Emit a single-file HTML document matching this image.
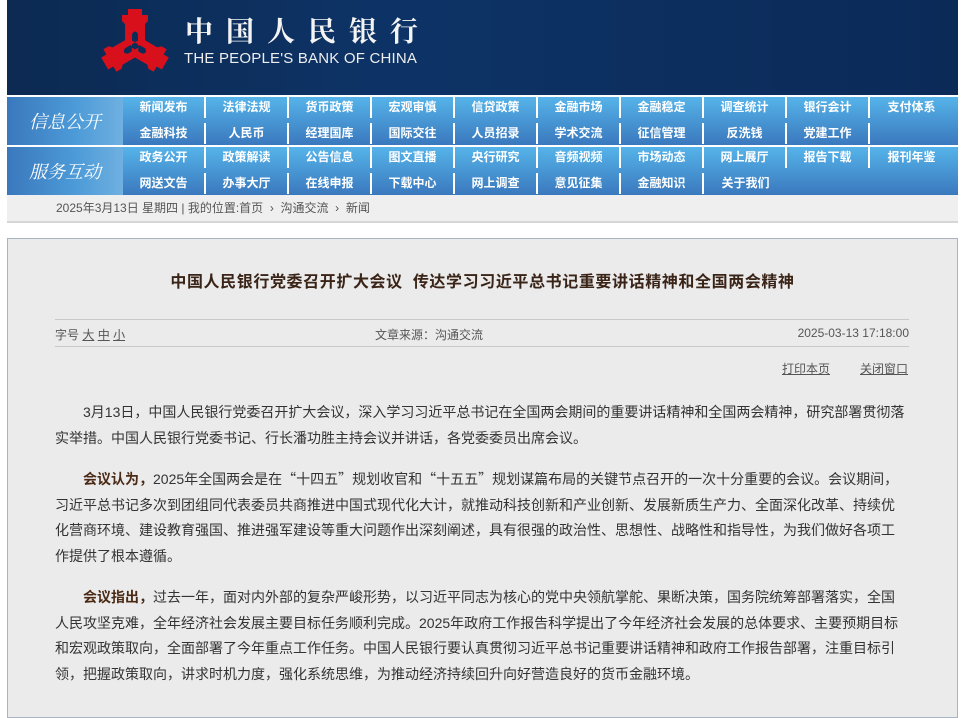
<!DOCTYPE html>
<html><head><meta charset="utf-8"><style>
*{margin:0;padding:0;box-sizing:border-box}
body{width:961px;height:695px;overflow:hidden;background:#fff;font-family:"Liberation Sans","Noto Sans CJK SC",sans-serif;font-size:12px;color:#333}
#hd{position:absolute;left:7px;top:0;width:951px;height:95px;background:linear-gradient(90deg,#0c2a52 0%,#0d3366 40%,#0b2a58 100%)}
.cn{position:absolute;left:178px;top:12px;color:#f4f4f4;font-family:"Noto Serif CJK SC",serif;font-size:28px;font-weight:bold;letter-spacing:13px;line-height:36px}
.en{position:absolute;left:177px;top:50px;color:#eee;font-size:15px;line-height:18px;letter-spacing:.2px}
.nav{position:absolute;left:7px;width:951px;height:48px;background:linear-gradient(#56b4ea,#3a78bd)}
.lab{position:absolute;left:0;top:0;width:116px;height:48px;background:linear-gradient(90deg,#3a78bd,#4d9bd8 60%,#6fb0e0);color:#fff;font-family:"Noto Serif CJK SC",serif;font-style:italic;font-size:18px;line-height:48px;text-align:center}
.it{position:absolute;width:83px;height:21px;color:#fff;font-weight:bold;font-size:12px;line-height:21px;text-align:center;border-right:2px solid #fff}
.it.n{border-right:none}
#bc{position:absolute;left:7px;top:195px;width:951px;height:28px;background:#efefef;border-bottom:2px solid #d6d6d6;color:#555;font-size:12px;line-height:27px;padding-left:49px}
#box{position:absolute;left:7px;top:238px;width:951px;height:480px;background:#ebebeb;border:1px solid #a8b4c4}
h1{position:absolute;left:0;width:949px;top:29px;text-align:center;font-size:16px;letter-spacing:.6px;font-weight:bold;color:#3a2418}
.l{position:absolute;left:47px;width:854px;border-top:1px solid #c8c8c8}
.m{position:absolute;top:87px;font-size:12px;color:#555}
.u{position:absolute;top:121px;font-size:12px;color:#555;text-decoration:underline}
.p{position:absolute;left:47px;width:890px;font-size:14px;line-height:25.5px;text-indent:28px;color:#333;white-space:nowrap}
.p b{color:#4a2a14}
.q{font-family:"Noto Sans CJK SC",sans-serif}
</style></head><body>
<div id="hd">
<svg style="position:absolute;left:88px;top:6px" width="80" height="72" viewBox="-40 -40 80 72">
<g id="a" fill="#d8101c"><path d="M-10 -4 L-10 -22 L-13 -25 L-13 -31 L-7 -31 L-7 -37 L7 -37 L7 -31 L13 -31 L13 -25 L10 -22 L10 -4 L3 0 L3 -12 Q0 -17 -3 -12 L-3 0 Z"/></g>
<use href="#a" transform="rotate(120 0 0) translate(0 2)"/>
<use href="#a" transform="rotate(240 0 0) translate(0 2)"/>
</svg>
<div class="cn">中国人民银行</div>
<div class="en">THE PEOPLE'S BANK OF CHINA</div>
</div>
<div class="nav" style="top:97px"><div class="lab">信息公开</div>
<div class="it" style="left:116px;top:0">新闻发布</div><div class="it" style="left:199px;top:0">法律法规</div><div class="it" style="left:282px;top:0">货币政策</div><div class="it" style="left:365px;top:0">宏观审慎</div><div class="it" style="left:448px;top:0">信贷政策</div><div class="it" style="left:531px;top:0">金融市场</div><div class="it" style="left:614px;top:0">金融稳定</div><div class="it" style="left:697px;top:0">调查统计</div><div class="it" style="left:780px;top:0">银行会计</div><div class="it n" style="left:863px;top:0">支付体系</div>
<div class="it" style="left:116px;top:26px">金融科技</div><div class="it" style="left:199px;top:26px">人民币</div><div class="it" style="left:282px;top:26px">经理国库</div><div class="it" style="left:365px;top:26px">国际交往</div><div class="it" style="left:448px;top:26px">人员招录</div><div class="it" style="left:531px;top:26px">学术交流</div><div class="it" style="left:614px;top:26px">征信管理</div><div class="it" style="left:697px;top:26px">反洗钱</div><div class="it" style="left:780px;top:26px">党建工作</div>
</div>
<div class="nav" style="top:147px"><div class="lab">服务互动</div>
<div class="it" style="left:116px;top:0">政务公开</div><div class="it" style="left:199px;top:0">政策解读</div><div class="it" style="left:282px;top:0">公告信息</div><div class="it" style="left:365px;top:0">图文直播</div><div class="it" style="left:448px;top:0">央行研究</div><div class="it" style="left:531px;top:0">音频视频</div><div class="it" style="left:614px;top:0">市场动态</div><div class="it" style="left:697px;top:0">网上展厅</div><div class="it" style="left:780px;top:0">报告下载</div><div class="it n" style="left:863px;top:0">报刊年鉴</div>
<div class="it" style="left:116px;top:26px">网送文告</div><div class="it" style="left:199px;top:26px">办事大厅</div><div class="it" style="left:282px;top:26px">在线申报</div><div class="it" style="left:365px;top:26px">下载中心</div><div class="it" style="left:448px;top:26px">网上调查</div><div class="it" style="left:531px;top:26px">意见征集</div><div class="it" style="left:614px;top:26px">金融知识</div><div class="it n" style="left:697px;top:26px">关于我们</div>
</div>
<div id="bc">2025年3月13日 星期四 | 我的位置:首页 &nbsp;› &nbsp;沟通交流 &nbsp;› &nbsp;新闻</div>
<div id="box">
<h1>中国人民银行党委召开扩大会议&nbsp; 传达学习习近平总书记重要讲话精神和全国两会精神</h1>
<div class="l" style="top:80px"></div>
<div class="m" style="left:47px">字号 <u>大</u> <u>中</u> <u>小</u></div>
<div class="m" style="left:367px">文章来源：沟通交流</div>
<div class="m" style="right:48px">2025-03-13 17:18:00</div>
<div class="l" style="top:107px"></div>
<div class="u" style="left:774px">打印本页</div>
<div class="u" style="left:852px">关闭窗口</div>
<div class="p" style="top:161px">3月13日，中国人民银行党委召开扩大会议，深入学习习近平总书记在全国两会期间的重要讲话精神和全国两会精神，研究部署贯彻落<br>实举措。中国人民银行党委书记、行长潘功胜主持会议并讲话，各党委委员出席会议。</div>
<div class="p" style="top:228px"><b>会议认为，</b>2025年全国两会是在<span class="q">“</span>十四五<span class="q">”</span>规划收官和<span class="q">“</span>十五五<span class="q">”</span>规划谋篇布局的关键节点召开的一次十分重要的会议。会议期间，<br>习近平总书记多次到团组同代表委员共商推进中国式现代化大计，就推动科技创新和产业创新、发展新质生产力、全面深化改革、持续优<br>化营商环境、建设教育强国、推进强军建设等重大问题作出深刻阐述，具有很强的政治性、思想性、战略性和指导性，为我们做好各项工<br>作提供了根本遵循。</div>
<div class="p" style="top:346px"><b>会议指出，</b>过去一年，面对内外部的复杂严峻形势，以习近平同志为核心的党中央领航掌舵、果断决策，国务院统筹部署落实，全国<br>人民攻坚克难，全年经济社会发展主要目标任务顺利完成。2025年政府工作报告科学提出了今年经济社会发展的总体要求、主要预期目标<br>和宏观政策取向，全面部署了今年重点工作任务。中国人民银行要认真贯彻习近平总书记重要讲话精神和政府工作报告部署，注重目标引<br>领，把握政策取向，讲求时机力度，强化系统思维，为推动经济持续回升向好营造良好的货币金融环境。</div>
</div>
</body></html>
